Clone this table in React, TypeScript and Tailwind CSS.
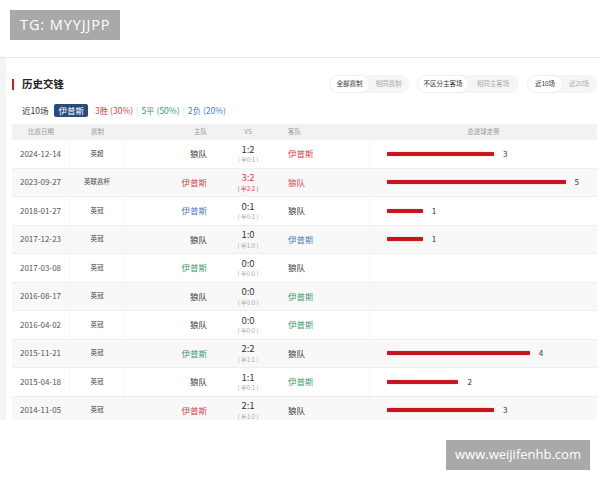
import React from 'react';

type Side = 'plain' | 'red' | 'blue' | 'green';

interface Match {
  date: string;
  comp: string;
  home: string;
  homeTone: Side;
  score: string;
  half: string;
  scoreRed?: boolean;
  away: string;
  awayTone: Side;
  goals: number;
}

const matches: Match[] = [
  { date: '2024-12-14', comp: '英超', home: '狼队', homeTone: 'plain', score: '1:2', half: '半0:1', away: '伊普斯', awayTone: 'red', goals: 3 },
  { date: '2023-09-27', comp: '英联赛杯', home: '伊普斯', homeTone: 'red', score: '3:2', half: '半2:2', scoreRed: true, away: '狼队', awayTone: 'red', goals: 5 },
  { date: '2018-01-27', comp: '英冠', home: '伊普斯', homeTone: 'blue', score: '0:1', half: '半0:1', away: '狼队', awayTone: 'plain', goals: 1 },
  { date: '2017-12-23', comp: '英冠', home: '狼队', homeTone: 'plain', score: '1:0', half: '半1:0', away: '伊普斯', awayTone: 'blue', goals: 1 },
  { date: '2017-03-08', comp: '英冠', home: '伊普斯', homeTone: 'green', score: '0:0', half: '半0:0', away: '狼队', awayTone: 'plain', goals: 0 },
  { date: '2016-08-17', comp: '英冠', home: '狼队', homeTone: 'plain', score: '0:0', half: '半0:0', away: '伊普斯', awayTone: 'green', goals: 0 },
  { date: '2016-04-02', comp: '英冠', home: '狼队', homeTone: 'plain', score: '0:0', half: '半0:0', away: '伊普斯', awayTone: 'green', goals: 0 },
  { date: '2015-11-21', comp: '英冠', home: '伊普斯', homeTone: 'green', score: '2:2', half: '半1:1', away: '狼队', awayTone: 'plain', goals: 4 },
  { date: '2015-04-18', comp: '英冠', home: '狼队', homeTone: 'plain', score: '1:1', half: '半0:1', away: '伊普斯', awayTone: 'green', goals: 2 },
  { date: '2014-11-05', comp: '英冠', home: '伊普斯', homeTone: 'red', score: '2:1', half: '半1:0', away: '狼队', awayTone: 'plain', goals: 3 },
];

const toneClass: Record<Side, string> = {
  plain: 'text-[#333]',
  red: 'text-[#d0454c]',
  blue: 'text-[#4b7bb8]',
  green: 'text-[#3e9a6a]',
};

const font = { fontFamily: '"Noto Sans CJK SC", "Noto Sans", "Liberation Sans", sans-serif' };

export default function App() {
  return (
    <div className="w-[600px] h-[480px] bg-white overflow-hidden" style={font}>
      {/* Top strip */}
      <div className="h-[58px] pl-[10px] pt-[10px] border-b border-[#e6e6e6]">
        <div
          className="w-[110px] h-[30px] bg-[#a9a9a9] text-white text-[14.5px] flex items-center pl-[10px] tracking-[0.9px]"
          style={{ fontFamily: '"Open Sans", "Liberation Sans", sans-serif' }}
        >
          TG: MYYJJPP
        </div>
      </div>

      {/* Main panel */}
      <div className="h-[362px] bg-[#f4f4f4] pl-[6px] overflow-hidden">
        <div className="h-full bg-white pl-[6px] pr-[3px] pt-[16px]">
          <HeaderRow />
          <SummaryRow />
          <MatchTable />
        </div>
      </div>

      {/* Bottom watermark */}
      <div className="flex justify-end pr-[10px] pt-[20px]">
        <div
          className="w-[144px] h-[30px] bg-[#a9a9a9] text-white text-[13px] flex items-center justify-center"
          style={{ fontFamily: '"Open Sans", "Liberation Sans", sans-serif' }}
        >
          www.weijifenhb.com
        </div>
      </div>
    </div>
  );
}

function HeaderRow() {
  return (
    <div className="flex items-center justify-between h-[18px] mt-[1px]">
      <div className="flex items-center">
        <span className="w-[2px] h-[11px] bg-[#c8202a] mr-[8px]" />
        <span className="text-[10.5px] font-bold text-[#222]">历史交锋</span>
      </div>
      <div className="flex items-center gap-[8px]">
        <Pill active="全部赛制" inactive="相同赛制" w="w-[80px]" />
        <Pill active="不区分主客场" inactive="相同主客场" w="w-[102px]" />
        <Pill active="近10场" inactive="近20场" w="w-[70px]" />
      </div>
    </div>
  );
}

function Pill({ active, inactive, w }: { active: string; inactive: string; w: string }) {
  return (
    <div className={`${w} h-[18px] rounded-full bg-[#f5f5f5] flex items-center p-[1px] text-[6.5px]`}>
      <span className="flex-1 h-full rounded-full bg-white shadow-[0_0_2px_rgba(0,0,0,0.08)] flex items-center justify-center text-[#333]">
        {active}
      </span>
      <span className="flex-1 h-full flex items-center justify-center text-[#aaa]">{inactive}</span>
    </div>
  );
}

function SummaryRow() {
  return (
    <div className="flex items-center h-[14px] mt-[10px] pl-[10px] text-[8.5px]">
      <span className="text-[#333]">近10场</span>
      <span className="ml-[6px] px-[4px] h-[13px] flex items-center bg-[#284a7c] text-white rounded-[2px]">伊普斯</span>
      <span className="ml-[7px] text-[#d0454c]">3胜 (30%)</span>
      <span className="mx-[3px] text-[#ddd]">|</span>
      <span className="text-[#3e9a6a]">5平 (50%)</span>
      <span className="mx-[3px] text-[#ddd]">|</span>
      <span className="text-[#4b7bb8]">2负 (20%)</span>
    </div>
  );
}

function MatchTable() {
  return (
    <div className="mt-[7px]">
      <div className="flex h-[16px] bg-[#f2f2f2] text-[6.5px] text-[#999] items-center">
        <div className="w-[58px] text-center">比赛日期</div>
        <div className="w-[55px] text-center">赛制</div>
        <div className="w-[87px] text-right pr-[5px]">主队</div>
        <div className="w-[72px] text-center">VS</div>
        <div className="w-[86px] pl-[4px]">客队</div>
        <div className="flex-1 text-center">总进球走势</div>
      </div>
      {matches.map((m, i) => (
        <div
          key={m.date}
          className={`flex h-[28.5px] items-center border-b border-[#eeeeee] ${i % 2 === 1 ? 'bg-[#f8f8f8]' : 'bg-white'}`}
        >
          <div className="w-[58px] h-full flex items-center justify-center text-[8px] text-[#555] border-r border-[#f6f6f6]">
            {m.date}
          </div>
          <div className="w-[55px] h-full flex items-center justify-center text-[6.5px] text-[#444] border-r border-[#f6f6f6]">
            {m.comp}
          </div>
          <div className={`w-[87px] text-right pr-[5px] text-[8.5px] ${toneClass[m.homeTone]}`}>{m.home}</div>
          <div className="w-[72px] flex flex-col items-center leading-none">
            <span className={`text-[9.5px] ${m.scoreRed ? 'text-[#d0454c]' : 'text-[#333]'}`}>{m.score}</span>
            <span className={`text-[6px] mt-[3px] ${m.scoreRed ? 'text-[#d0454c]' : 'text-[#aaa]'}`}>( {m.half} )</span>
          </div>
          <div className={`w-[86px] h-full flex items-center pl-[4px] text-[8.5px] border-r border-[#f6f6f6] ${toneClass[m.awayTone]}`}>
            {m.away}
          </div>
          <div className="flex-1 flex items-center pl-[17px]">
            {m.goals > 0 && (
              <>
                <span
                  className="h-[4px] bg-[#c8161f] rounded-[1px] shadow-[0_0_1px_rgba(120,0,0,0.6)]"
                  style={{ width: m.goals * 35.7 }}
                />
                <span className="ml-[9px] text-[8px] text-[#333]">{m.goals}</span>
              </>
            )}
          </div>
        </div>
      ))}
    </div>
  );
}
